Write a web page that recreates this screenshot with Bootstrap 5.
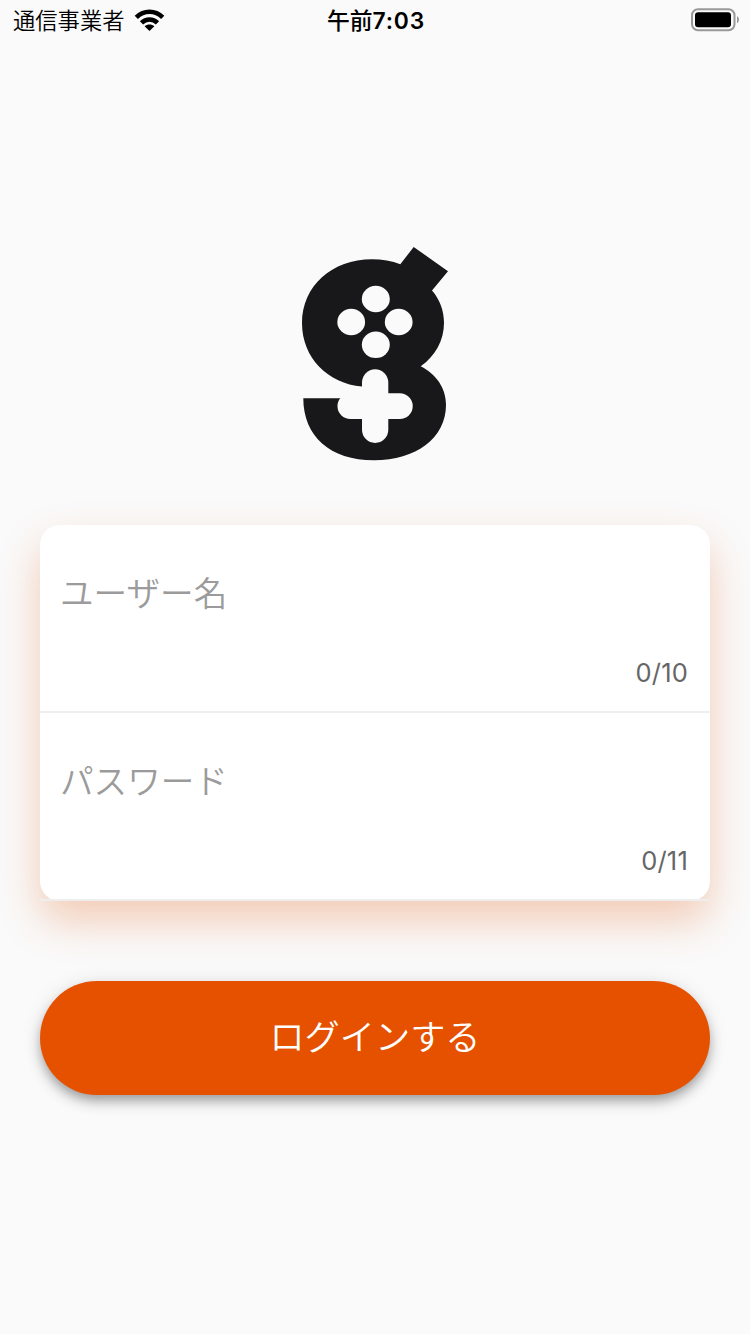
<!DOCTYPE html>
<html lang="ja">
<head>
<meta charset="utf-8">
<meta name="viewport" content="width=device-width, initial-scale=1">
<title>ログイン</title>
<link href="https://cdn.jsdelivr.net/npm/bootstrap@5.3.0/dist/css/bootstrap.min.css" rel="stylesheet">
<style>
  body { background: #fafafa; font-family: Inter, "Noto Sans CJK JP", sans-serif; color: #000; }
  .screen { height: 1334px; overflow: hidden; }
  .status { height: 40px; padding: 0 11px 0 13px; font-size: 22.3px; line-height: 40px; }
  .status > * { flex: 1 1 0; }
  .carrier { font-weight: 350; }
  .carrier span { padding-top: 1px; }
  .clock { font-weight: 600; font-size: 22.8px; letter-spacing: .8px; padding-top: 1px; }
  .clock span { font-weight: 500; letter-spacing: 0; }
  .brand { margin-top: 205px; height: 217px; }
  .fields { margin: 63px 40px 0; height: 376px; background: #fff; border-radius: 20px;
            box-shadow: 0 20px 42px rgba(225,95,27,.3); }
  .field-row { height: 188px; padding: 0 22px 0 20px; border-bottom: 2px solid #eee; }
  .field-row label { margin-top: 42px; font-size: 33.6px; line-height: 50px; color: #9b9b9b; font-weight: 350; font-family: "Noto Sans CJK JP", sans-serif; }
  .counter { margin-top: 40px; font-size: 25.5px; line-height: 32px; color: #666; font-weight: 400; letter-spacing: .2px; }
  .login { margin: 80px 40px 0; height: 114px; padding: 0 0 2px; background: #e65100; font-size: 35.2px; font-weight: 350;
           box-shadow: 0 6px 10px -2px rgba(0,0,0,.2), 0 8px 14px rgba(0,0,0,.16), 0 2px 20px rgba(0,0,0,.1); }
  .login, .login:hover { background: #e65100; color: #fff; border: 0; }
</style>
</head>
<body>
<main class="screen d-flex flex-column">
  <header class="status d-flex align-items-center">
    <div class="carrier d-flex align-items-center">
      <span>通信事業者</span>
      <svg class="ms-2" width="32" height="24" viewBox="0 0 32 24">
        <g fill="none" stroke="#000" stroke-width="4.6">
          <path d="M3.3 9.4C10.9 1.9 22.1 1.9 29.7 9.4"/>
          <path d="M8.5 14.9C13.1 10.3 19.9 10.3 24.5 14.9"/>
        </g>
        <path d="M11.6 18.2C14.4 15.8 18.6 15.8 21.4 18.2L16.5 23Z"/>
      </svg>
    </div>
    <div class="clock text-center"><span>午前</span>7:03</div>
    <div class="d-flex justify-content-end">
      <svg width="48" height="24" viewBox="0 0 48 24">
        <rect x="1" y="1.2" width="42.5" height="21" rx="6" fill="none" stroke="#999" stroke-width="2"/>
        <rect x="4" y="4.2" width="36" height="15" rx="3.2"/>
        <path d="M46 8Q48 9 48 11.6T46 15.2Z" fill="#999"/>
      </svg>
    </div>
  </header>

  <div class="brand text-center">
    <svg class="d-block mx-auto" width="150" height="217" viewBox="300 245 150 217">
      <path fill="#18181a" d="M413.7 247L448 271.2L432 290.4C439.5 299 444 310 444 323C444 340 435.5 356 420.7 366.3C436 374 446 388 446 405C446 438 416 460.3 374 460.3C330 460.3 303.3 436 303.3 398.2H362V386.6C328 383.5 302 358 302 323C302 286 332 259.2 372 259.2C382 259.2 392 261 400.3 264.2Z"/>
      <g fill="#fafafa">
        <ellipse cx="375.8" cy="299" rx="14" ry="13.2"/>
        <ellipse cx="351.2" cy="322" rx="13.9" ry="13.2"/>
        <ellipse cx="398.7" cy="322" rx="13.9" ry="13.2"/>
        <ellipse cx="375.8" cy="344.8" rx="14" ry="13.2"/>
        <rect x="362" y="369.3" width="26.3" height="73.6" rx="13.1"/>
        <rect x="337.5" y="393.3" width="75.2" height="25.8" rx="12.9"/>
      </g>
    </svg>
  </div>

  <section class="fields">
    <div class="field-row d-flex flex-column">
      <label>ユーザー名</label>
      <div class="counter text-end">0/10</div>
    </div>
    <div class="field-row d-flex flex-column">
      <label>パスワード</label>
      <div class="counter text-end">0/11</div>
    </div>
  </section>

  <button type="button" class="login btn rounded-pill">ログインする</button>
</main>
<script src="https://cdn.jsdelivr.net/npm/bootstrap@5.3.0/dist/js/bootstrap.bundle.min.js"></script>
</body>
</html>
